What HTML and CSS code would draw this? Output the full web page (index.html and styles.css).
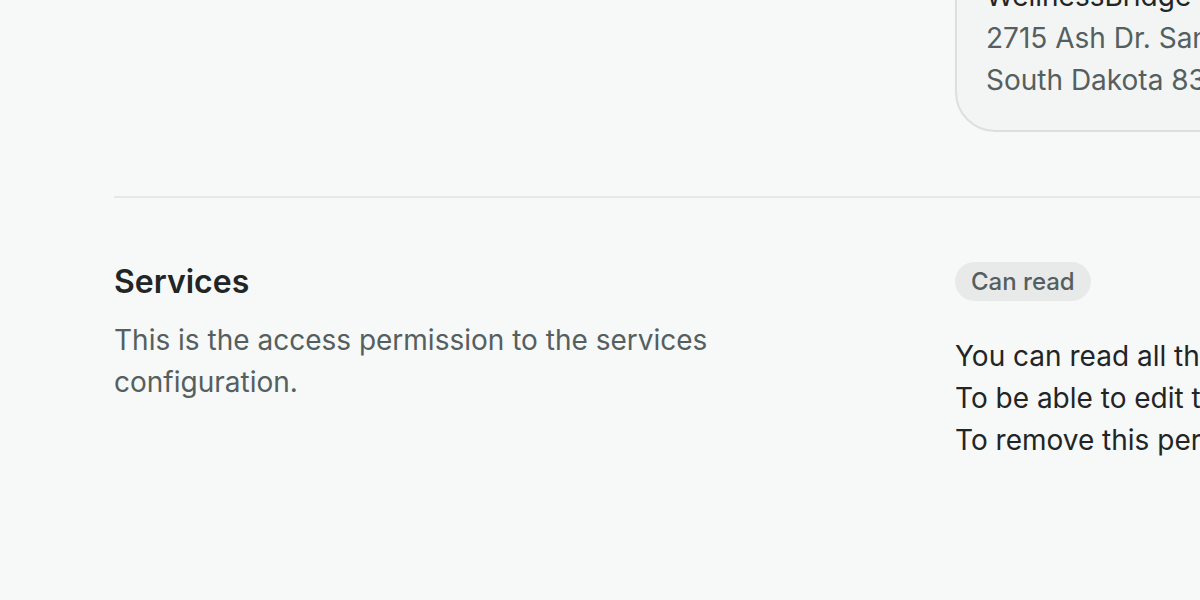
FILE: index.html
```html
<!DOCTYPE html>
<html>
<head>
<meta charset="utf-8">
<link rel="stylesheet" href="styles.css">
</head>
<body>
<main class="page">
  <section class="row row-first">
    <div class="row-left"></div>
    <div class="row-right">
      <div class="address-card">
        <div class="address-name">WellnessBridge</div>
        <div class="address-line">2715 Ash Dr. San Jose,</div>
        <div class="address-line">South Dakota 83475</div>
      </div>
    </div>
  </section>
  <section class="row row-second">
    <div class="row-left">
      <h2 class="row-title">Services</h2>
      <p class="row-desc">This is the access permission to the services configuration.</p>
    </div>
    <div class="row-right">
      <div class="badge-wrap"><span class="badge">Can read</span></div>
      <div class="perm-text">
        <p>You can read all the services configuration.</p>
        <p>To be able to edit them, ask an administrator.</p>
        <p>To remove this permission, contact the owner.</p>
      </div>
    </div>
  </section>
</main>
</body>
</html>
```

FILE: styles.css
```css
html, body {
  margin: 0;
  padding: 0;
  background: #f7f8f8;
  overflow: hidden;
  width: 1200px;
  height: 600px;
}
body {
  font-family: Inter, "Noto Sans", sans-serif;
  color: #222525;
}
.page {
  padding-left: 114px;
  width: 1700px;
}
.row {
  display: grid;
  grid-template-columns: 841px 700px;
}
.row-first {
  margin-top: -55px;
  padding-bottom: 64px;
  border-bottom: 2px solid #e6e8e8;
}
.row-second {
  padding-top: 63px;
}
.address-card {
  border: 2px solid #dcdfdf;
  border-radius: 40px;
  background: #f3f4f4;
  padding: 28px 29px 29px;
  font-size: 28px;
  line-height: 42px;
}
.address-name {
  color: #222525;
}
.address-line {
  color: #555f5f;
}
.row-title {
  margin: 0;
  font-size: 32px;
  line-height: 42px;
  font-weight: 600;
  color: #222525;
}
.row-desc {
  margin: 16px 0 0;
  font-size: 28px;
  line-height: 42px;
  color: #555f5f;
  width: 640px;
}
.badge-wrap {
  display: flex;
  padding-top: 1px;
}
.badge {
  display: inline-flex;
  align-items: center;
  height: 39px;
  background: #e8eaea;
  color: #555f5f;
  font-size: 24px;
  font-weight: 500;
  padding: 0 16px;
  border-radius: 20px;
}
.perm-text {
  margin-top: 34px;
  font-size: 28px;
  line-height: 42px;
  color: #222525;
}
.perm-text p {
  margin: 0;
  white-space: nowrap;
}
```
